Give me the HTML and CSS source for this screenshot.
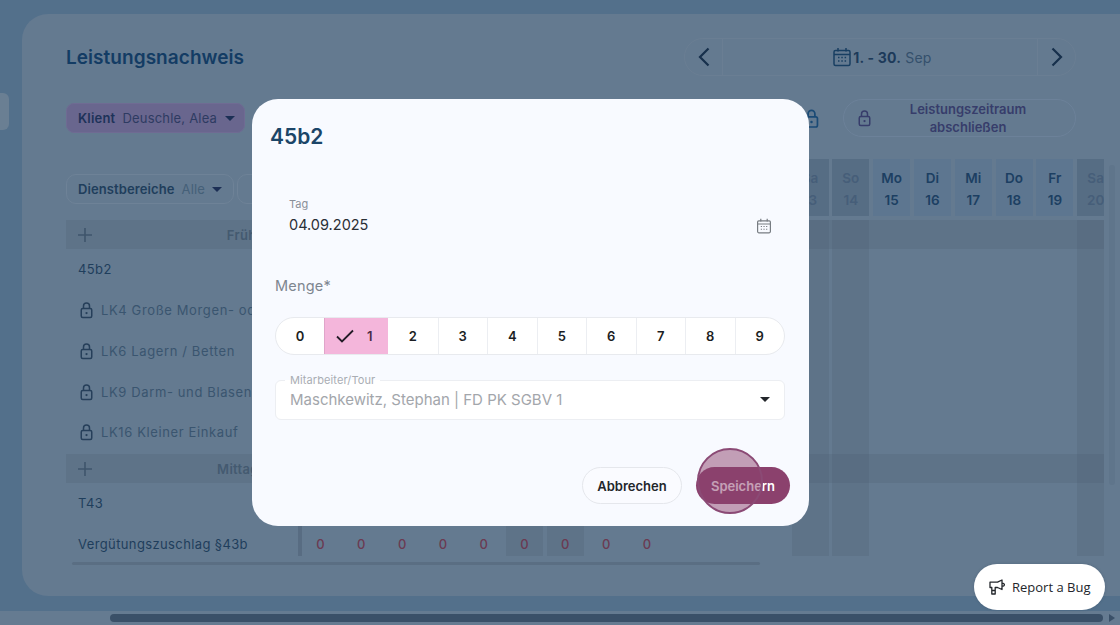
FILE: index.html
```html
<!DOCTYPE html>
<html lang="de">
<head>
<meta charset="utf-8">
<title>Leistungsnachweis</title>
<link rel="stylesheet" href="styles.css">
</head>
<body>
<svg class="defs" width="0" height="0" aria-hidden="true">
  <symbol id="lock" viewBox="0 0 20 24">
    <rect x="3" y="10" width="14" height="12" rx="2" fill="none" stroke="currentColor" stroke-width="2"/>
    <path d="M6 10V6.500a4 4 0 0 1 8 0V10" fill="none" stroke="currentColor" stroke-width="2"/>
    <circle cx="10" cy="16" r="1.500" fill="currentColor"/>
  </symbol>
  <symbol id="cal" viewBox="0 0 20 20">
    <rect x="2" y="3.500" width="16" height="15" rx="1.500" fill="none" stroke="currentColor" stroke-width="1.500"/>
    <path d="M2 7.500h16M6 1v3.500M14 1v3.500" fill="none" stroke="currentColor" stroke-width="1.500"/>
    <path d="M6 10.500h1.500M9.300 10.500h1.500M12.600 10.500h1.500M6 14h1.500M9.300 14h1.500M12.600 14h1.500" fill="none" stroke="currentColor" stroke-width="1.300"/>
  </symbol>
  <symbol id="plus" viewBox="0 0 14 14">
    <path d="M7 0v14M0 7h14" fill="none" stroke="currentColor" stroke-width="1.600"/>
  </symbol>
</svg>

<div class="shell">
  <aside class="sidebar"><div class="side-tab"></div></aside>
  <main class="card">
    <header class="top">
      <h1 class="page-title">Leistungsnachweis</h1>
      <nav class="date-nav">
        <button class="nav-btn nav-prev"><svg width="12" height="20" viewBox="0 0 12 20"><path d="M10.500 1.500 2 10l8.500 8.500" fill="none" stroke="currentColor" stroke-width="2.200"/></svg></button>
        <div class="nav-range">
          <svg class="nav-cal" width="20" height="20"><use href="#cal"/></svg>
          <span><b>1. - 30.</b> Sep</span>
        </div>
        <button class="nav-btn nav-next"><svg width="12" height="20" viewBox="0 0 12 20"><path d="M1.500 1.500 10 10l-8.500 8.500" fill="none" stroke="currentColor" stroke-width="2.200"/></svg></button>
      </nav>
    </header>

    <section class="tools">
      <div class="client-pill"><b>Klient</b><span>Deuschle, Alea</span><i class="caret"></i></div>
      <div class="tools-right">
        <svg class="lock-lg" width="17" height="21"><use href="#lock"/></svg>
        <button class="close-btn">
          <svg class="lock-sm" width="15" height="18"><use href="#lock"/></svg>
          <span>Leistungszeitraum abschließen</span>
        </button>
      </div>
    </section>

    <div class="board-wrap">
      <div class="board">
        <div class="head">
          <div class="filters">
            <div class="filter-pill"><b>Dienstbereiche</b><span>Alle</span><i class="caret"></i></div>
            <div class="filter-pill filter-next"></div>
          </div>
          <div class="days">
            <div class="day"><b>Mo</b><b>1</b></div>
            <div class="day"><b>Di</b><b>2</b></div>
            <div class="day"><b>Mi</b><b>3</b></div>
            <div class="day"><b>Do</b><b>4</b></div>
            <div class="day"><b>Fr</b><b>5</b></div>
            <div class="day we"><b>Sa</b><b>6</b></div>
            <div class="day we"><b>So</b><b>7</b></div>
            <div class="day"><b>Mo</b><b>8</b></div>
            <div class="day"><b>Di</b><b>9</b></div>
            <div class="day"><b>Mi</b><b>10</b></div>
            <div class="day"><b>Do</b><b>11</b></div>
            <div class="day"><b>Fr</b><b>12</b></div>
            <div class="day we"><b>Sa</b><b>13</b></div>
            <div class="day we"><b>So</b><b>14</b></div>
            <div class="day"><b>Mo</b><b>15</b></div>
            <div class="day"><b>Di</b><b>16</b></div>
            <div class="day"><b>Mi</b><b>17</b></div>
            <div class="day"><b>Do</b><b>18</b></div>
            <div class="day"><b>Fr</b><b>19</b></div>
            <div class="day we"><b>Sa</b><b>20</b></div>
          </div>
        </div>

        <div class="body">
          <div class="stripes">
            <div class="stripe s6"></div>
            <div class="stripe s7"></div>
            <div class="stripe s13"></div>
            <div class="stripe s14"></div>
            <div class="stripe s20"></div>
          </div>
          <div class="rows">
            <div class="band"><svg class="plus" width="14" height="14"><use href="#plus"/></svg><span>Frühdienst</span></div>
            <div class="row"><div class="name">45b2</div></div>
            <div class="row"><div class="name sub"><svg width="15" height="18"><use href="#lock"/></svg><span>LK4 Große Morgen- oder Abendtoilette</span></div></div>
            <div class="row"><div class="name sub"><svg width="15" height="18"><use href="#lock"/></svg><span>LK6 Lagern / Betten</span></div></div>
            <div class="row"><div class="name sub"><svg width="15" height="18"><use href="#lock"/></svg><span>LK9 Darm- und Blasenentleerung</span></div></div>
            <div class="row"><div class="name sub"><svg width="15" height="18"><use href="#lock"/></svg><span>LK16 Kleiner Einkauf</span></div></div>
            <div class="band"><svg class="plus" width="14" height="14"><use href="#plus"/></svg><span>Mittagsdienst</span></div>
            <div class="row"><div class="name">T43</div></div>
            <div class="row">
              <div class="name">Vergütungszuschlag §43b</div>
              <div class="vals">
                <span>0</span><span>0</span><span>0</span><span>0</span><span>0</span><span>0</span><span>0</span><span>0</span><span>0</span>
              </div>
            </div>
          </div>
        </div>
        <div class="inner-scroll"></div>
      </div>
      <div class="vscroll"></div>
    </div>
  </main>
</div>

<div class="hscroll"><div class="hthumb"></div><i class="harrow"></i></div>

<section class="modal">
  <h2 class="modal-title">45b2</h2>
  <div class="date-field">
    <div>
      <div class="date-label">Tag</div>
      <div class="date-value">04.09.2025</div>
    </div>
    <svg class="date-icon" width="16" height="16"><use href="#cal"/></svg>
  </div>
  <div class="qty-label">Menge*</div>
  <div class="seg">
    <div class="seg-cell first">0</div>
    <div class="seg-cell on"><svg width="18" height="14" viewBox="0 0 18 14"><path d="M1 7.500 6 12.500 17 1.500" fill="none" stroke="currentColor" stroke-width="1.800"/></svg><span>1</span></div>
    <div class="seg-cell nb">2</div>
    <div class="seg-cell">3</div>
    <div class="seg-cell">4</div>
    <div class="seg-cell">5</div>
    <div class="seg-cell">6</div>
    <div class="seg-cell">7</div>
    <div class="seg-cell">8</div>
    <div class="seg-cell">9</div>
  </div>
  <div class="select">
    <span class="select-label">Mitarbeiter/Tour</span>
    <span class="select-value">Maschkewitz, Stephan | FD PK SGBV 1</span>
    <i class="caret dark"></i>
  </div>
  <div class="actions">
    <button class="btn-cancel">Abbrechen</button>
    <button class="btn-save">Speichern<i class="ripple"></i></button>
  </div>
</section>

<button class="bug">
  <svg width="16" height="16" viewBox="0 0 16 16"><path d="M1 3.200h7.500L13 1v9.500L8.500 8.500H6.200V15H2.800V8.500H1zM2.800 11.500h3.400M13 4.200c1.600 0 2.400 .7 2.400 1.600s-.8 1.600-2.400 1.600" fill="none" stroke="currentColor" stroke-width="1.300" stroke-linejoin="round"/></svg>
  <span>Report a Bug</span>
</button>
</body>
</html>
```
FILE: styles.css
```css
* { box-sizing: border-box; }
html, body { margin: 0; height: 100%; }
body {
  width: 1120px;
  height: 625px;
  overflow: hidden;
  position: relative;
  background: #53708b;
  font-family: "Inter", "Liberation Sans", sans-serif;
  color: #1d3d5c;
}
.defs { position: absolute; }
button { font: inherit; cursor: pointer; }
b { font-weight: 600; }

.shell { display: flex; padding-top: 14px; height: 611px; overflow: hidden; }
.sidebar { flex: none; width: 22px; }
.side-tab { margin-top: 79px; width: 9px; height: 37px; background: #6a7f93; border-radius: 0 6px 6px 0; }
.card {
  flex: none;
  width: 1120px;
  height: 582px;
  padding: 24px 0 0 44px;
  background: #647a90;
  border-radius: 26px 0 0 26px;
}

.top { display: flex; justify-content: space-between; align-items: center; width: 1010px; height: 38px; }
.page-title { margin: 0; font-size: 19px; font-weight: 600; color: #133c64; letter-spacing: .05px; }
.date-nav { display: flex; width: 392px; height: 38px; border: 1px solid #6a7e93; border-radius: 19px; }
.nav-btn { width: 38px; border: 0; background: none; color: #17304c; padding: 0; display: flex; align-items: center; justify-content: center; }
.nav-prev { border-right: 1px solid #6a7e93; }
.nav-next { border-left: 1px solid #6a7e93; }
.nav-range { flex: 1; display: flex; align-items: center; justify-content: center; gap: 1px; padding-left: 4px; font-size: 14px; letter-spacing: .2px; color: #34506c; }
.nav-range b { color: #1d3a5a; font-weight: 700; }
.nav-cal { color: #183f62; }

.tools { display: flex; justify-content: space-between; align-items: center; width: 1010px; height: 38px; margin-top: 23px; }
.client-pill { display: flex; align-items: center; width: 179px; height: 30px; padding: 0 11px; background: #69668e; border: 1px solid #6f6b93; border-radius: 8px; font-size: 13px; color: #2e3b62; letter-spacing: .2px; white-space: nowrap; }
.client-pill b { color: #1d3259; margin-right: 7px; }
.caret { display: inline-block; flex: none; width: 0; height: 0; border: 5px solid transparent; border-top: 5px solid #1c2f55; border-bottom: 0; margin-left: 8px; }
.caret.dark { border-top-color: #23262b; }
.tools-right { display: flex; align-items: center; gap: 23px; }
.lock-lg { color: #1a4a75; }
.close-btn { display: flex; align-items: center; width: 233px; height: 38px; padding: 0 13px; background: none; border: 1px solid #6c8199; border-radius: 19px; color: #373d6b; font-size: 13px; font-weight: 600; line-height: 18px; text-align: center; }
.lock-sm { flex: none; color: #373d6b; }
.close-btn span { flex: 1; padding: 0 6px 0 8px; }

.board-wrap { display: flex; margin-top: 22px; }
.board { flex: none; width: 1038px; overflow: hidden; }
.head { display: flex; height: 57px; }
.filters { flex: none; width: 236px; display: flex; align-items: center; gap: 3px; padding-top: 3px; overflow: hidden; }
.filter-pill { flex: none; display: flex; align-items: center; width: 168px; height: 30px; padding: 0 11px; border: 1px solid #6e8297; border-radius: 10px; font-size: 13px; color: #456078; letter-spacing: .1px; }
.filter-pill b { color: #1f3e5c; margin-right: 7px; }
.filter-pill .caret { margin-left: 7px; }
.filter-next { width: 60px; }
.days { display: grid; grid-template-columns: repeat(20, 37px); column-gap: 3.8px; }
.day { display: flex; flex-direction: column; align-items: center; justify-content: center; gap: 4px; padding-top: 2px; background: #5d7690; color: #1c3f62; font-size: 13.500px; line-height: 18px; overflow: hidden; }
.day.we { background: #566d84; color: #465e79; }

.body { display: grid; height: 336px; margin-top: 4px; overflow: hidden; }
.stripes, .rows { grid-area: 1 / 1; }
.stripes { display: grid; grid-template-columns: repeat(20, 37px); column-gap: 3.8px; padding-left: 236px; }
.stripe { background: #5e7388; }
.s6 { grid-column: 6; }
.s7 { grid-column: 7; }
.s13 { grid-column: 13; }
.s14 { grid-column: 14; }
.s20 { grid-column: 20; }
.band { display: flex; align-items: center; height: 29px; padding-left: 12px; background: rgba(72, 90, 108, .22); color: #445a70; font-size: 13px; font-weight: 600; letter-spacing: .3px; }
.row + .band { margin-top: 1.250px; }
.band span { width: 340px; text-align: center; }
.plus { flex: none; color: #3f556c; }
.row { display: flex; height: 40.750px; }
.name { flex: none; display: flex; align-items: center; gap: 7px; width: 236px; padding-left: 12px; border-right: 4px solid #586c82; font-size: 13px; color: #1f3e5c; letter-spacing: .38px; white-space: nowrap; overflow: hidden; }
.sub { padding-left: 13px; color: #3a556f; letter-spacing: .62px; }
.sub svg { flex: none; color: #263f5a; }
.vals { display: grid; grid-template-columns: repeat(20, 37px); column-gap: 3.8px; align-items: center; text-align: center; font-size: 13px; font-weight: 500; color: #6b3a52; }
.inner-scroll { width: 688px; height: 3px; margin: 6px 0 0 6px; background: #5a6e83; border-radius: 2px; }
.vscroll { flex: none; width: 6px; height: 320px; margin: 6px 0 0 5px; background: #5f758b; border-radius: 3px; }

.hscroll { display: flex; align-items: center; height: 14px; background: #657b91; padding-left: 110px; }
.hthumb { width: 993px; height: 8px; background: #3a5068; border-radius: 4px; }
.harrow { width: 0; height: 0; margin-left: 6px; border-left: 6px solid #3a5068; border-top: 4px solid transparent; border-bottom: 4px solid transparent; }

.modal { position: absolute; left: 252px; top: 99px; width: 557px; height: 427px; padding: 23px 24px 0 23px; background: #f8faff; border-radius: 26px; }
.modal-title { margin: 0 0 0 -5px; font-size: 21px; line-height: 30px; font-weight: 600; color: #1b4568; }
.date-field { display: flex; justify-content: space-between; align-items: flex-end; margin-top: 46px; padding: 0 13px 0 14px; }
.date-label { font-size: 11px; line-height: 13px; color: #8a8f98; }
.date-value { margin-top: 4px; font-size: 14.500px; line-height: 20px; color: #2a2f36; }
.date-icon { color: #777c82; margin-bottom: 1px; }
.qty-label { margin-top: 41px; font-size: 14.500px; line-height: 20px; color: #7e8690; letter-spacing: .2px; }
.seg { display: flex; height: 38px; margin-top: 21px; background: #fff; border: 1px solid #e8eaee; border-radius: 19px; overflow: hidden; }
.seg-cell { flex: none; width: 49.500px; display: flex; align-items: center; justify-content: center; border-left: 1px solid #eceef2; font-size: 13px; font-weight: 600; color: #1b1e23; }
.seg-cell.first { width: 48px; border-left: 0; }
.seg-cell.nb { border-left: 0; }
.seg-cell.on { width: 64px; gap: 13px; justify-content: flex-start; padding-left: 11px; background: #f4b6db; border-left: 1px solid #e0a5ca; color: #4a2c45; }
.seg-cell.on svg { color: #241c28; }
.select { position: relative; display: flex; justify-content: space-between; align-items: center; height: 40px; margin-top: 25px; padding: 0 14px 2px; background: #fff; border: 1px solid #eceef2; border-radius: 6px; font-size: 15px; color: #a3a6ab; white-space: nowrap; }
.select-label { position: absolute; left: 9px; top: -7px; padding: 0 5px; background: linear-gradient(#f8faff 50%, #fff 50%); font-size: 11px; line-height: 13px; color: #a9adb3; letter-spacing: .1px; }
.actions { display: flex; justify-content: flex-end; gap: 14px; margin: 47px -5px 0 0; }
.btn-cancel, .btn-save { height: 37px; border-radius: 19px; font-size: 13px; font-weight: 600; }
.btn-cancel { width: 100px; background: #fafbff; border: 1px solid #e5e7ec; color: #23262b; }
.btn-save { position: relative; width: 94px; background: #8b416d; border: 0; color: #fff; }
.ripple { position: absolute; left: 1px; top: -19px; width: 66px; height: 66px; border: 2px solid #8b4a75; border-radius: 50%; background: rgba(139, 65, 109, .5); }

.bug { position: absolute; left: 974px; top: 564px; width: 131px; height: 46px; display: flex; align-items: center; gap: 7px; padding: 0 0 0 15px; background: #fff; border: 0; border-radius: 23px; font-family: "Open Sans", sans-serif; font-size: 13px; color: #23262b; box-shadow: 0 0 3px rgba(40, 60, 80, .25); }
.bug svg { flex: none; }
```
